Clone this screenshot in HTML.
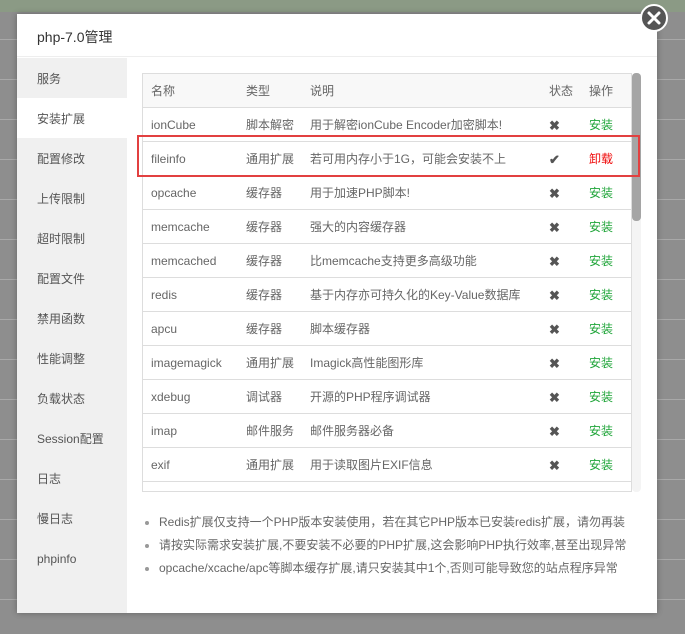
<!DOCTYPE html>
<html><head><meta charset="utf-8"><style>
*{margin:0;padding:0;box-sizing:border-box}
body{width:685px;height:634px;overflow:hidden;position:relative;font-family:"Liberation Sans","Noto Sans CJK SC",sans-serif;font-size:12px;color:#555;
background:repeating-linear-gradient(#8e8e8e 0,#8e8e8e 39px,#a8a8a8 39px,#a8a8a8 40px);}
.top{position:absolute;left:0;top:0;width:685px;height:12px;background:#8b9a85}
.modal{position:absolute;left:17px;top:14px;width:640px;height:599px;background:#fff;box-shadow:0 0 6px rgba(0,0,0,.3)}
.hd{height:43px;border-bottom:1px solid #eee;padding-left:20px;line-height:46px;font-size:14px;color:#333}
.side{position:absolute;left:0;top:44px;width:110px;height:555px;background:#f0f0f0}
.side div{height:40px;line-height:42px;padding-left:20px;font-size:12px;color:#555}
.side .on{background:#fff}
.tbl{position:absolute;left:125px;top:59px;width:490px;height:419px;border:1px solid #ddd;overflow:hidden}
.row{height:34px;border-bottom:1px solid #ddd;position:relative;line-height:35px;color:#666}
.row span{position:absolute;top:0}
.h{background:#f8f8f8}
.c1{left:8px}.c2{left:103px}.c3{left:167px}.c4{left:406px}.c5{left:446px}
.g{color:#20a53a}.r{color:#ef0808}
.x{font-weight:bold;color:#555;font-size:13px}
.sb{position:absolute;left:615px;top:59px;width:9px;height:419px;background:#f4f4f4;border-radius:4px}
.sb i{position:absolute;left:0;top:0;width:9px;height:148px;background:#a5a5a5;border-radius:4px}
.red{position:absolute;left:120px;top:121px;width:503px;height:42px;border:2px solid #e24040}
.notes{position:absolute;left:128px;top:497px}
.notes div{height:23px;line-height:23px;padding-left:14px;position:relative;color:#666;white-space:nowrap}
.notes div:before{content:"";position:absolute;left:0;top:10px;width:4px;height:4px;border-radius:2px;background:#999}
.close{position:absolute;left:640px;top:4px;width:28px;height:28px;border-radius:50%;background:#555;border:2px solid #fff;color:#fff;text-align:center}
</style></head><body>
<div class="top"></div>
<div class="modal">
<div class="hd">php-7.0管理</div>
<div class="side">
<div>服务</div><div class="on">安装扩展</div><div>配置修改</div><div>上传限制</div><div>超时限制</div><div>配置文件</div><div>禁用函数</div><div>性能调整</div><div>负载状态</div><div>Session配置</div><div>日志</div><div>慢日志</div><div>phpinfo</div>
</div>
<div class="tbl">
<div class="row h"><span class="c1">名称</span><span class="c2">类型</span><span class="c3">说明</span><span class="c4">状态</span><span class="c5">操作</span></div>
<div class="row"><span class="c1">ionCube</span><span class="c2">脚本解密</span><span class="c3">用于解密ionCube Encoder加密脚本!</span><span class="c4 x">✖</span><span class="c5 g">安装</span></div>
<div class="row"><span class="c1">fileinfo</span><span class="c2">通用扩展</span><span class="c3">若可用内存小于1G，可能会安装不上</span><span class="c4 x">✔</span><span class="c5 r">卸载</span></div>
<div class="row"><span class="c1">opcache</span><span class="c2">缓存器</span><span class="c3">用于加速PHP脚本!</span><span class="c4 x">✖</span><span class="c5 g">安装</span></div>
<div class="row"><span class="c1">memcache</span><span class="c2">缓存器</span><span class="c3">强大的内容缓存器</span><span class="c4 x">✖</span><span class="c5 g">安装</span></div>
<div class="row"><span class="c1">memcached</span><span class="c2">缓存器</span><span class="c3">比memcache支持更多高级功能</span><span class="c4 x">✖</span><span class="c5 g">安装</span></div>
<div class="row"><span class="c1">redis</span><span class="c2">缓存器</span><span class="c3">基于内存亦可持久化的Key-Value数据库</span><span class="c4 x">✖</span><span class="c5 g">安装</span></div>
<div class="row"><span class="c1">apcu</span><span class="c2">缓存器</span><span class="c3">脚本缓存器</span><span class="c4 x">✖</span><span class="c5 g">安装</span></div>
<div class="row"><span class="c1">imagemagick</span><span class="c2">通用扩展</span><span class="c3">Imagick高性能图形库</span><span class="c4 x">✖</span><span class="c5 g">安装</span></div>
<div class="row"><span class="c1">xdebug</span><span class="c2">调试器</span><span class="c3">开源的PHP程序调试器</span><span class="c4 x">✖</span><span class="c5 g">安装</span></div>
<div class="row"><span class="c1">imap</span><span class="c2">邮件服务</span><span class="c3">邮件服务器必备</span><span class="c4 x">✖</span><span class="c5 g">安装</span></div>
<div class="row"><span class="c1">exif</span><span class="c2">通用扩展</span><span class="c3">用于读取图片EXIF信息</span><span class="c4 x">✖</span><span class="c5 g">安装</span></div>
</div>
<div class="sb"><i></i></div>
<div class="red"></div>
<div class="notes">
<div>Redis扩展仅支持一个PHP版本安装使用，若在其它PHP版本已安装redis扩展，请勿再装</div>
<div>请按实际需求安装扩展,不要安装不必要的PHP扩展,这会影响PHP执行效率,甚至出现异常</div>
<div>opcache/xcache/apc等脚本缓存扩展,请只安装其中1个,否则可能导致您的站点程序异常</div>
</div>
</div>
<div class="close"><svg width="24" height="24" viewBox="0 0 24 24"><path d="M7 7L17 17M17 7L7 17" stroke="#fff" stroke-width="3" stroke-linecap="round"/></svg></div>
</body></html>
